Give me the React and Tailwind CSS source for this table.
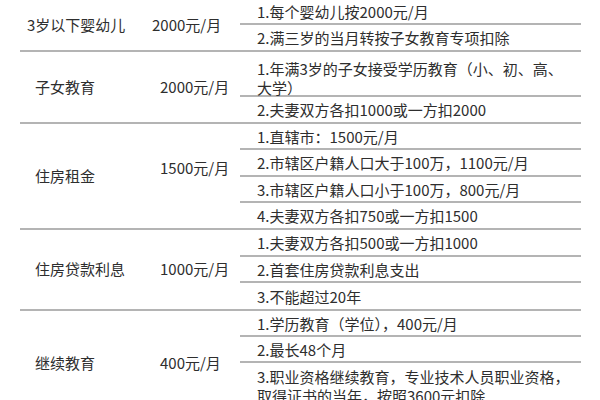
const groups = [
  {
    name: "3岁以下婴幼儿",
    amount: "2000元/月",
    nameCls: "pl-[7px]",
    amountCls: "pl-[2px]",
    items: [
      { h: "h-[25px]", lines: ["1.每个婴幼儿按2000元/月"] },
      { h: "h-[25px]", lines: ["2.满三岁的当月转按子女教育专项扣除"] },
    ],
  },
  {
    name: "子女教育",
    amount: "2000元/月",
    nameCls: "pl-[15px]",
    amountCls: "pl-[10px]",
    items: [
      { h: "h-[45px]", pad: "pt-[7px]", top: true, lines: ["1.年满3岁的子女接受学历教育（小、初、高、", "大学）"] },
      { h: "h-[25px]", lines: ["2.夫妻双方各扣1000或一方扣2000"] },
    ],
  },
  {
    name: "住房租金",
    amount: "1500元/月",
    nameCls: "pl-[15px]",
    amountCls: "pl-[10px] mb-[16px]",
    items: [
      { h: "h-[26px]", lines: ["1.直辖市：1500元/月"] },
      { h: "h-[27px]", lines: ["2.市辖区户籍人口大于100万，1100元/月"] },
      { h: "h-[26px]", lines: ["3.市辖区户籍人口小于100万，800元/月"] },
      { h: "h-[25px]", lines: ["4.夫妻双方各扣750或一方扣1500"] },
    ],
  },
  {
    name: "住房贷款利息",
    amount: "1000元/月",
    nameCls: "pl-[15px]",
    amountCls: "pl-[10px]",
    items: [
      { h: "h-[27px]", lines: ["1.夫妻双方各扣500或一方扣1000"] },
      { h: "h-[26px]", lines: ["2.首套住房贷款利息支出"] },
      { h: "h-[26px]", lines: ["3.不能超过20年"] },
    ],
  },
  {
    name: "继续教育",
    amount: "400元/月",
    nameCls: "pl-[15px]",
    amountCls: "pl-[10px]",
    items: [
      { h: "h-[26px]", lines: ["1.学历教育（学位），400元/月"] },
      { h: "h-[26px]", lines: ["2.最长48个月"] },
      { h: "h-[52px]", pad: "pt-[4px]", top: true, lines: ["3.职业资格继续教育，专业技术人员职业资格，", "取得证书的当年，按照3600元扣除"] },
    ],
  },
];

const Group = ({ group }) => {
  const last = group.items.length - 1;
  return (
    <div className="flex border-b-2 border-[#b4b4b4]">
      <div className={`w-[130px] flex items-center whitespace-nowrap ${group.nameCls}`}>
        {group.name}
      </div>
      <div className="w-[90px] flex items-center">
        <span className={`whitespace-nowrap ${group.amountCls}`}>{group.amount}</span>
      </div>
      <div className="flex-1 flex flex-col">
        {group.items.map((item, i) => (
          <div
            key={i}
            className={`flex ${item.top ? "items-start" : "items-center"} pl-[17px] leading-[19px] whitespace-nowrap ${item.h} ${item.pad || ""} ${
              i === last ? "" : "border-b-2 border-[#b4b4b4]"
            }`}
          >
            <div>
              {item.lines.map((line, j) => (
                <div key={j}>{line}</div>
              ))}
            </div>
          </div>
        ))}
      </div>
    </div>
  );
};

export default function App() {
  return (
    <div className="w-[600px] h-[400px] overflow-hidden bg-white text-[15px] text-[#2e2e2e] font-['Noto_Sans_CJK_SC',sans-serif]">
      <div className="ml-[20px] w-[561px]">
        {groups.map((g, i) => (
          <Group key={i} group={g} />
        ))}
      </div>
    </div>
  );
}
